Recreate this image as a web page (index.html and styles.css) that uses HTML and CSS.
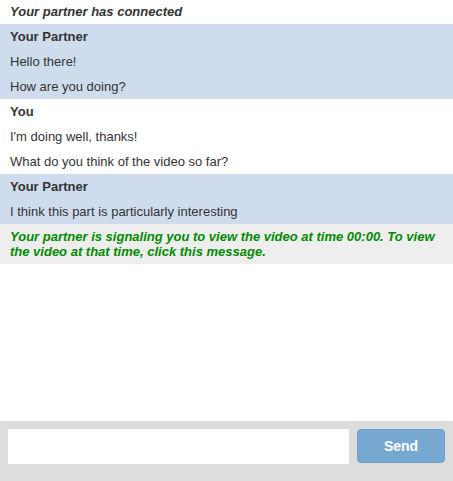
FILE: index.html
```html
<!DOCTYPE html>
<html>
<head>
<meta charset="utf-8">
<link rel="stylesheet" href="styles.css">
</head>
<body>
<div class="chat">
  <div class="log">
    <div class="status">Your partner has connected</div>
    <div class="group partner">
      <div class="name">Your Partner</div>
      <div class="line">Hello there!</div>
      <div class="line">How are you doing?</div>
    </div>
    <div class="group you">
      <div class="name">You</div>
      <div class="line">I'm doing well, thanks!</div>
      <div class="line">What do you think of the video so far?</div>
    </div>
    <div class="group partner">
      <div class="name">Your Partner</div>
      <div class="line">I think this part is particularly interesting</div>
    </div>
    <div class="signal">Your partner is signaling you to view the video at time 00:00. To view the video at that time, click this message.</div>
  </div>
  <div class="footer">
    <input class="input" type="text">
    <button class="send">Send</button>
  </div>
</div>
</body>
</html>
```
FILE: styles.css
```css
html, body {
  margin: 0;
  padding: 0;
  height: 100%;
}
body {
  font-family: "Liberation Sans", Arial, sans-serif;
  font-size: 13px;
  color: #333;
  background: #fff;
}
.chat {
  display: flex;
  flex-direction: column;
  height: 481px;
}
.log {
  flex: 1;
}
.status {
  font-weight: bold;
  font-style: italic;
  padding: 4px 10px 5px;
  line-height: 15px;
}
.group.partner {
  background: #cfdcee;
}
.name, .line {
  padding: 5px 10px;
  line-height: 15px;
}
.name {
  font-weight: bold;
}
.signal {
  background: #eeeeee;
  color: #008a00;
  font-weight: bold;
  font-style: italic;
  padding: 5px 10px;
  line-height: 15px;
  cursor: pointer;
}
.footer {
  background: #dddddd;
  height: 60px;
  box-sizing: border-box;
  padding: 8px;
  display: flex;
  gap: 8px;
  align-items: flex-start;
}
.input {
  flex: 1;
  height: 35px;
  box-sizing: border-box;
  border: none;
  background: #fff;
  margin: 0;
  padding: 0 8px;
  outline: none;
}
.send {
  width: 88px;
  height: 34px;
  border: 1px solid #6f9fcb;
  border-radius: 4px;
  background: #77a8d2;
  color: #fff;
  font-family: "Liberation Sans", Arial, sans-serif;
  font-size: 14px;
  font-weight: bold;
  margin: 0;
  padding: 0;
}
```
